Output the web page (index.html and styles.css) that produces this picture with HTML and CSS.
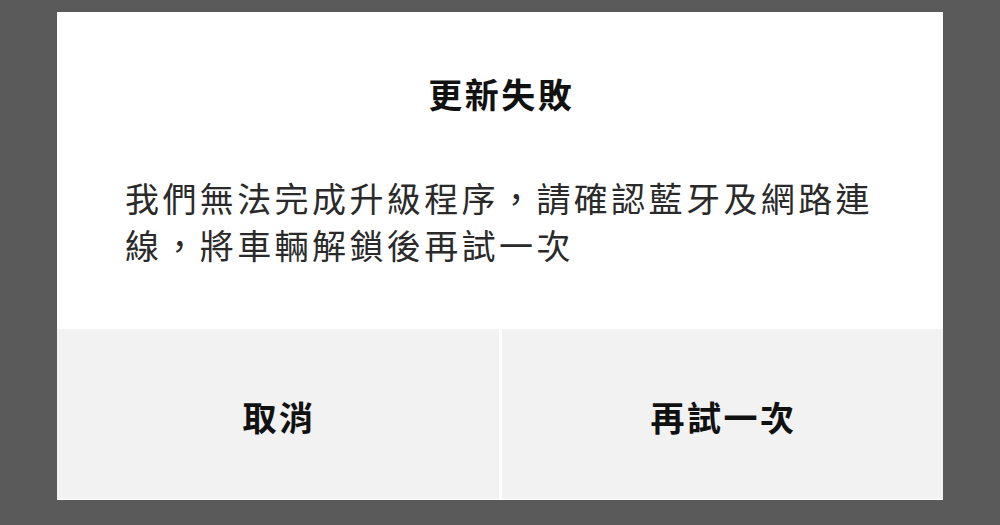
FILE: index.html
```html
<!DOCTYPE html>
<html lang="zh-Hant">
<head>
<meta charset="utf-8">
<title>更新失敗</title>
<link rel="stylesheet" href="styles.css">
</head>
<body>
<div class="dialog">
  <div class="content">
    <h1 class="title">更新失敗</h1>
    <p class="message">我們無法完成升級程序，請確認藍牙及網路連線，將車輛解鎖後再試一次</p>
  </div>
  <div class="actions">
    <div class="btn">取消</div>
    <div class="btn">再試一次</div>
  </div>
</div>
</body>
</html>
```

FILE: styles.css
```css
html, body {
  margin: 0;
  padding: 0;
}
body {
  background: #5a5a5a;
  width: 1000px;
  height: 525px;
  overflow: hidden;
  padding-top: 12px;
  box-sizing: border-box;
  font-family: "Noto Sans CJK TC", "Noto Sans CJK SC", "Noto Sans", sans-serif;
}
.dialog {
  margin-left: 57px;
  width: 886px;
  height: 488px;
  background: #ffffff;
  display: flex;
  flex-direction: column;
  box-sizing: border-box;
  padding-bottom: 1px;
}
.content {
  height: 317px;
  box-sizing: border-box;
  padding-top: 62px;
}
.title {
  margin: 0;
  font-size: 34px;
  line-height: 40px;
  font-weight: 700;
  color: #111;
  text-align: center;
  letter-spacing: 2.5px;
  padding-left: 2.5px;
}
.message {
  margin: 60px 0 0 0;
  padding: 0 50px 0 68px;
  font-size: 34px;
  line-height: 47px;
  font-weight: 400;
  color: #2a2a2a;
  letter-spacing: 3.4px;
}
.actions {
  flex: 1;
  display: grid;
  grid-template-columns: 1fr 1fr;
  gap: 3px;
}
.btn {
  background: #f2f2f2;
  display: flex;
  align-items: center;
  justify-content: center;
  font-size: 34px;
  font-weight: 700;
  color: #111;
  letter-spacing: 2.5px;
  padding-left: 2.5px;
  padding-top: 4px;
  box-sizing: border-box;
}
```
